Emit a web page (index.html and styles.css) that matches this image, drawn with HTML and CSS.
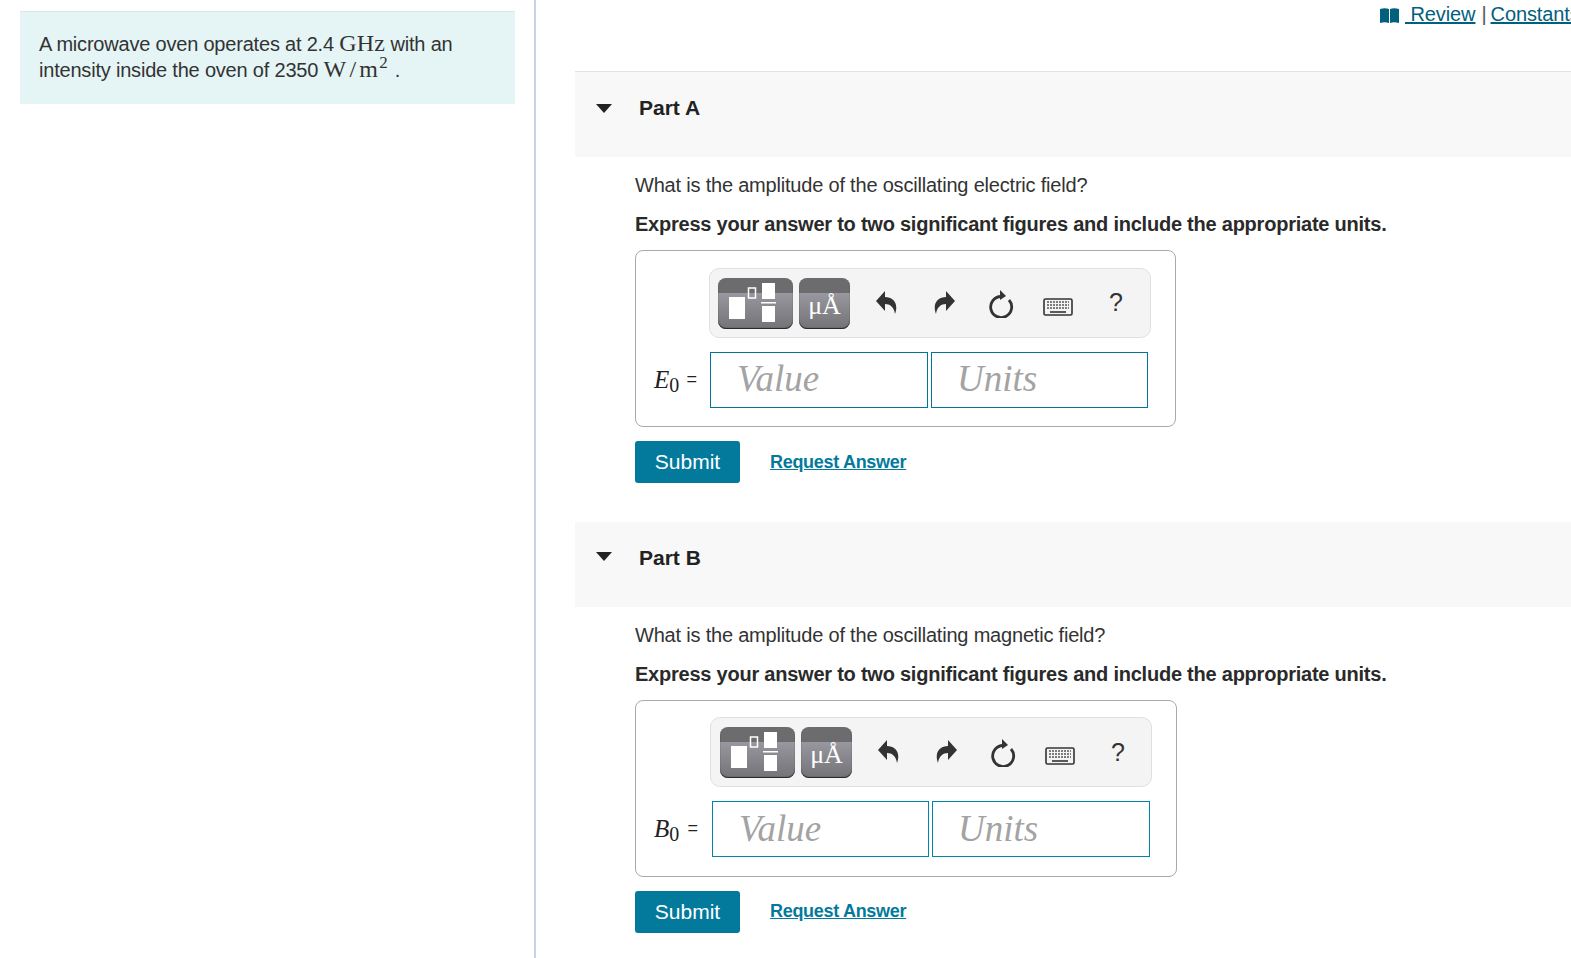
FILE: index.html
```html
<!DOCTYPE html>
<html lang="en">
<head>
<meta charset="utf-8">
<title>Microwave oven problem</title>
<link rel="stylesheet" href="styles.css">
</head>
<body>
<div class="page">
  <aside class="side">
    <div class="callout">A microwave oven operates at 2.4 <span class="math">GHz</span> with an intensity inside the oven of 2350 <span class="math">W<span class="slash">/</span>m<span class="sup">2</span></span><span class="period">.</span></div>
  </aside>
  <main class="main">
    <div class="toplinks">
      <svg class="book" viewBox="0 0 19 15" width="19" height="15"><path d="M0 1Q5-.5 9 1V15Q5 13.500 0 15Z"/><path d="M10 1Q14-.5 19 1V15Q14 13.500 10 15Z"/></svg>
      <a class="link" href="#">&nbsp;Review</a><span class="sep">|</span><a class="link" href="#">Constants</a>
    </div>

    <section class="part">
      <header class="part-head"><span class="caret"></span><h2 class="part-title">Part A</h2></header>
      <div class="part-body">
        <p class="question">What is the amplitude of the oscillating electric field?</p>
        <p class="instruction">Express your answer to two significant figures and include the appropriate units.</p>
        <div class="answer">
          <div class="toolbar">
            <span class="tool tool-wide"><svg viewBox="0 0 75 51" width="75" height="51"><rect x="11" y="19" width="16" height="22" fill="#fff"/><rect x="30.500" y="10" width="7" height="10" fill="none" stroke="#fff" stroke-width="1.500"/><rect x="44" y="5" width="13" height="16" fill="#fff"/><rect x="43" y="24" width="15" height="1.500" fill="#fff"/><rect x="44" y="28" width="13" height="16" fill="#fff"/></svg></span>
            <span class="tool tool-unit">μÅ</span>
            <svg class="icon icon-undo" viewBox="0 0 22 24" width="22" height="24"><path d="M0 10 9 0V6C17 6 23 12 19 23 18 16 14 13 9 13V20Z"/></svg>
            <svg class="icon icon-redo" viewBox="0 0 22 24" width="22" height="24"><path d="M22 10 13 0V6C5 6-1 12 3 23 4 16 8 13 13 13V20Z"/></svg>
            <svg class="icon icon-reset" viewBox="0 0 26 28" width="26" height="28"><path d="M13 6.500A10.500 10.500 0 1 0 21 10" fill="none" stroke="#333" stroke-width="2.800"/><path d="M12 0 18 6 12 10Z"/></svg>
            <svg class="icon icon-keys" viewBox="0 0 30 18" width="30" height="18"><rect x="1" y="1" width="28" height="16" rx="1.500" fill="none" stroke="#333" stroke-width="1.600"/><path d="M4 4h22M4 7h22M4 10h22" stroke="#555" stroke-width="1.600" stroke-dasharray="2 1" fill="none"/><path d="M7 14h16" stroke="#333" stroke-width="1.600"/></svg>
            <span class="help">?</span>
          </div>
          <div class="entry">
            <span class="label"><i>E</i><span class="sub">0</span> <span class="eq">=</span></span>
            <input class="field" placeholder="Value" aria-label="Value">
            <input class="field field-units" placeholder="Units" aria-label="Units">
          </div>
        </div>
        <div class="actions"><button class="submit">Submit</button><a class="request" href="#">Request Answer</a></div>
      </div>
    </section>

    <section class="part part-b">
      <header class="part-head"><span class="caret"></span><h2 class="part-title">Part B</h2></header>
      <div class="part-body">
        <p class="question">What is the amplitude of the oscillating magnetic field?</p>
        <p class="instruction">Express your answer to two significant figures and include the appropriate units.</p>
        <div class="answer">
          <div class="toolbar">
            <span class="tool tool-wide"><svg viewBox="0 0 75 51" width="75" height="51"><rect x="11" y="19" width="16" height="22" fill="#fff"/><rect x="30.500" y="10" width="7" height="10" fill="none" stroke="#fff" stroke-width="1.500"/><rect x="44" y="5" width="13" height="16" fill="#fff"/><rect x="43" y="24" width="15" height="1.500" fill="#fff"/><rect x="44" y="28" width="13" height="16" fill="#fff"/></svg></span>
            <span class="tool tool-unit">μÅ</span>
            <svg class="icon icon-undo" viewBox="0 0 22 24" width="22" height="24"><path d="M0 10 9 0V6C17 6 23 12 19 23 18 16 14 13 9 13V20Z"/></svg>
            <svg class="icon icon-redo" viewBox="0 0 22 24" width="22" height="24"><path d="M22 10 13 0V6C5 6-1 12 3 23 4 16 8 13 13 13V20Z"/></svg>
            <svg class="icon icon-reset" viewBox="0 0 26 28" width="26" height="28"><path d="M13 6.500A10.500 10.500 0 1 0 21 10" fill="none" stroke="#333" stroke-width="2.800"/><path d="M12 0 18 6 12 10Z"/></svg>
            <svg class="icon icon-keys" viewBox="0 0 30 18" width="30" height="18"><rect x="1" y="1" width="28" height="16" rx="1.500" fill="none" stroke="#333" stroke-width="1.600"/><path d="M4 4h22M4 7h22M4 10h22" stroke="#555" stroke-width="1.600" stroke-dasharray="2 1" fill="none"/><path d="M7 14h16" stroke="#333" stroke-width="1.600"/></svg>
            <span class="help">?</span>
          </div>
          <div class="entry">
            <span class="label"><i>B</i><span class="sub">0</span> <span class="eq">=</span></span>
            <input class="field" placeholder="Value" aria-label="Value">
            <input class="field field-units" placeholder="Units" aria-label="Units">
          </div>
        </div>
        <div class="actions"><button class="submit">Submit</button><a class="request" href="#">Request Answer</a></div>
      </div>
    </section>
  </main>
</div>
</body>
</html>
```
FILE: styles.css
```css
* { box-sizing: border-box; }
html, body { margin: 0; height: 958px; overflow: hidden; background: #fff; }
body { font-family: "Liberation Sans", Arial, sans-serif; font-size: 20px; color: #333; }
.page { display: flex; width: 1600px; height: 958px; }
.side { flex: none; width: 536px; padding: 11px 20px 0; border-right: 2px solid #c3d6e8; }
.callout { width: 495px; height: 93px; padding: 19px 19px 0; background: #e5f5f6; border-top: 1px solid #dde3e6; line-height: 26px; letter-spacing: -.2px; }
.math { font-family: "Liberation Serif", serif; font-size: 24px; line-height: 20px; letter-spacing: .2px; }
.slash { margin: 0 3px 0 3px; }
.sup { font-size: 17px; line-height: 10px; position: relative; top: -9px; margin-left: 1px; }
.period { margin-left: 7px; }
.main { flex: none; width: 1010px; margin-left: 39px; }
.toplinks { height: 71px; padding: 3px 0 0 805px; display: flex; align-items: flex-start; line-height: 23px; white-space: nowrap; letter-spacing: -.1px; }
.book { fill: #01607e; margin: 5px 6px 0 0; flex: none; }
.link { color: #01607e; }
.sep { margin: 0 4px 0 6px; color: #555; }
.part-head { height: 86px; background: #f8f8f8; border-top: 1px solid #e2e2e2; display: flex; align-items: flex-start; padding: 25px 0 0 21px; }
.part-b .part-head { height: 85px; border-top: 0; padding-top: 25px; }
.caret { width: 0; height: 0; margin-top: 7px; border-left: 8px solid transparent; border-right: 8px solid transparent; border-top: 9px solid #222; }
.part-b .caret { margin-top: 5px; }
.part-title { margin: 0 0 0 27px; font-size: 21px; line-height: 21px; font-weight: 700; color: #222; }
.part-body { padding: 16px 0 39px 60px; }
.question { margin: 0; line-height: 24px; letter-spacing: -.2px; }
.instruction { margin: 15px 0 14px; line-height: 24px; font-weight: 700; color: #2a2a2a; letter-spacing: -.23px; }
.answer { width: 541px; height: 177px; padding: 17px 0 0 73px; border: 1px solid #aaa; border-radius: 8px; }
.part-b .answer { width: 542px; padding-left: 74px; padding-top: 16px; }
.toolbar { width: 442px; height: 70px; display: flex; align-items: center; padding-left: 8px; background: #f4f4f4; border: 1px solid #e0e0e0; border-radius: 10px; position: relative; }
.part-b .toolbar { padding-left: 9px; }
.tool { flex: none; height: 51px; border-radius: 8px; box-shadow: inset 0 -1px 1px #222; background: linear-gradient(#6c6c6e 0, #6c6c6e 29%, #99979f 29%, #737377 100%); }
.tool svg { display: block; }
.tool-wide { width: 75px; }
.tool-unit { width: 51px; margin-left: 6px; color: #fff; font-family: "Liberation Serif", serif; font-size: 26px; line-height: 56px; text-align: center; }
.icon { flex: none; fill: #333; }
.icon-undo { margin-left: 26px; margin-top: -1px; }
.icon-redo { margin-left: 35px; margin-top: -1px; }
.icon-reset { margin-left: 33px; margin-top: 1px; }
.icon-keys { margin-left: 29px; margin-top: 7px; }
.help { margin-left: 36px; font-size: 25px; line-height: 28px; margin-top: -2px; color: #333; font-family: "Liberation Sans", sans-serif; }
.part-b .help { margin-top: 0; }
.entry { display: flex; align-items: center; margin: 14px 0 0 -55px; }
.part-b .entry { margin-left: -56px; margin-top: 14px; }
.label { flex: none; width: 56px; font-family: "Liberation Serif", serif; font-size: 25px; color: #222; white-space: nowrap; }
.part-b .label { width: 58px; }
.sub { font-size: 20px; position: relative; top: 4px; margin-right: 1px; }
.eq { font-family: "Liberation Sans", sans-serif; font-size: 18px; position: relative; top: -3px; }
.part-b .eq { margin-left: 1px; }
.field { width: 218px; height: 56px; margin-right: 3px; padding: 0 0 4px 26px; border: 1px solid #00769a; border-radius: 0; outline: 0; background: #fff; font-family: "Liberation Serif", serif; font-style: italic; font-size: 37px; }
.field-units { width: 217px; padding-left: 25px; }
.part-b .field { width: 217px; padding-bottom: 2px; border-color: #0085a8; }
.part-b .field-units { width: 218px; }
.field::placeholder { color: #a3a3a3; opacity: 1; }
.actions { display: flex; align-items: center; margin-top: 14px; }
.submit { width: 105px; height: 42px; padding: 0; border: 0; border-radius: 3px; background: #037a9c; color: #fff; font: 21px "Liberation Sans", sans-serif; }
.request { margin-left: 30px; color: #037a9c; font-size: 18px; font-weight: 700; letter-spacing: -.3px; }
.part-b .request { margin-bottom: 2px; }
```
